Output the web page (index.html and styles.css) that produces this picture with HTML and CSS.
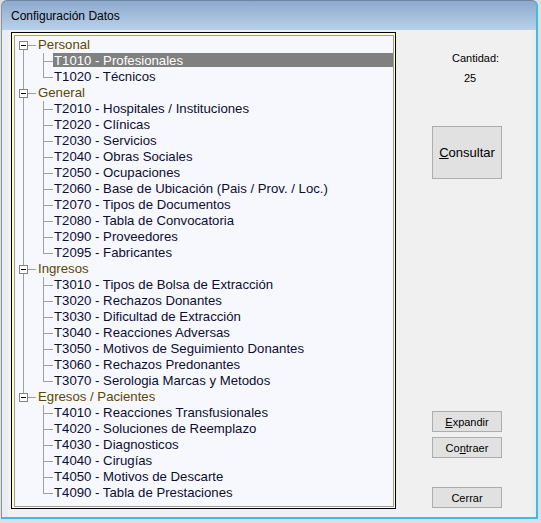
FILE: index.html
```html
<!DOCTYPE html>
<html lang="es">
<head>
  <meta charset="UTF-8" />
  <title>Configuración Datos</title>
  <link rel="stylesheet" href="styles.css">
</head>
<body>

  <div class="window">
    <!-- Title bar -->
    <div class="titlebar">Configuración Datos</div>

    <div class="client">
      <!-- Tree -->
      <div class="tree-frame">
        <div class="tree">

          <div class="group">
            <div class="group-row"><span class="toggle"></span><span class="stub"></span><span class="group-label">Personal</span></div>
            <div class="item"><span class="item-label selected">T1010 - Profesionales</span></div>
            <div class="item"><span class="item-label">T1020 - Técnicos</span></div>
          </div>

          <div class="group">
            <div class="group-row"><span class="toggle"></span><span class="stub"></span><span class="group-label">General</span></div>
            <div class="item"><span class="item-label">T2010 - Hospitales / Instituciones</span></div>
            <div class="item"><span class="item-label">T2020 - Clínicas</span></div>
            <div class="item"><span class="item-label">T2030 - Servicios</span></div>
            <div class="item"><span class="item-label">T2040 - Obras Sociales</span></div>
            <div class="item"><span class="item-label">T2050 - Ocupaciones</span></div>
            <div class="item"><span class="item-label">T2060 - Base de Ubicación (Pais / Prov. / Loc.)</span></div>
            <div class="item"><span class="item-label">T2070 - Tipos de Documentos</span></div>
            <div class="item"><span class="item-label">T2080 - Tabla de Convocatoria</span></div>
            <div class="item"><span class="item-label">T2090 - Proveedores</span></div>
            <div class="item"><span class="item-label">T2095 - Fabricantes</span></div>
          </div>

          <div class="group">
            <div class="group-row"><span class="toggle"></span><span class="stub"></span><span class="group-label">Ingresos</span></div>
            <div class="item"><span class="item-label">T3010 - Tipos de Bolsa de Extracción</span></div>
            <div class="item"><span class="item-label">T3020 - Rechazos Donantes</span></div>
            <div class="item"><span class="item-label">T3030 - Dificultad de Extracción</span></div>
            <div class="item"><span class="item-label">T3040 - Reacciones Adversas</span></div>
            <div class="item"><span class="item-label">T3050 - Motivos de Seguimiento Donantes</span></div>
            <div class="item"><span class="item-label">T3060 - Rechazos Predonantes</span></div>
            <div class="item"><span class="item-label">T3070 - Serologia Marcas y Metodos</span></div>
          </div>

          <div class="group">
            <div class="group-row"><span class="toggle"></span><span class="stub"></span><span class="group-label">Egresos / Pacientes</span></div>
            <div class="item"><span class="item-label">T4010 - Reacciones Transfusionales</span></div>
            <div class="item"><span class="item-label">T4020 - Soluciones de Reemplazo</span></div>
            <div class="item"><span class="item-label">T4030 - Diagnosticos</span></div>
            <div class="item"><span class="item-label">T4040 - Cirugías</span></div>
            <div class="item"><span class="item-label">T4050 - Motivos de Descarte</span></div>
            <div class="item"><span class="item-label">T4090 - Tabla de Prestaciones</span></div>
          </div>

        </div>
      </div>

      <!-- Side panel -->
      <div class="side">
        <div class="count-label">Cantidad:</div>
        <div class="count-value">25</div>
        <button class="btn btn-big"><u>C</u>onsultar</button>

        <div class="bottom-buttons">
          <button class="btn"><u>E</u>xpandir</button>
          <button class="btn">Co<u>n</u>traer</button>
          <button class="btn btn-close">Cerrar</button>
        </div>
      </div>
    </div>
  </div>

</body>
</html>
```

FILE: styles.css
```css
body {
  margin: 0;
  background-color: #dedede;
  font-family: "Liberation Sans", Arial, sans-serif;
}

.window {
  width: 534px;
  height: 516px;
  margin-left: 1px;
  border-left: 1px solid #8d949c;
  border-top: 1px solid #6f86a3;
  border-right: 2px solid #38bde3;
  border-bottom: 2px solid #38bde3;
  border-radius: 6px 6px 0 0;
  background: linear-gradient(#8da9cc, #b9d1ea 29px, #e9ecf0 29px);
  display: flex;
  flex-direction: column;
}

.titlebar {
  height: 29px;
  line-height: 31px;
  padding-left: 9px;
  font-size: 12px;
  color: #000;
}

.client {
  flex: 1;
  margin: 0 3px 0 6px;
  background-color: #f0f0f0;
  display: flex;
  padding: 2px 0 0 3px;
}

/* Tree view */

.tree-frame {
  border: 1px solid #000;
  background-color: #ffffd0;
  padding: 2px 1px 1px 2px;
  width: 380px;
  height: 472px;
}

.tree {
  height: 100%;
  padding-top: 1px;
  border: 1px solid #9d9d9d;
  background-color: #f7f8fe;
  box-sizing: border-box;
  font-size: 13.2px;
  color: #0d0d2e;
}

.group {
  position: relative;
}

.group:not(:last-child)::before {
  content: "";
  position: absolute;
  left: 8px;
  top: 13px;
  bottom: -4px;
  border-left: 1px solid #a0a0a0;
}

.group-row {
  height: 16px;
  display: flex;
  align-items: flex-start;
}

.toggle {
  position: relative;
  width: 9px;
  height: 9px;
  margin: 4px 0 0 4px;
  border: 1px solid #848484;
  background-color: #fff;
  box-sizing: border-box;
}

.toggle::after {
  content: "";
  position: absolute;
  left: 1px;
  top: 3px;
  width: 5px;
  height: 1px;
  background-color: #000;
}

.stub {
  width: 8px;
  margin-top: 8px;
  border-top: 1px solid #a0a0a0;
}

.group-label {
  padding-left: 2px;
  line-height: 16px;
  color: #5a4700;
}

.item {
  position: relative;
  height: 16px;
  display: flex;
  align-items: flex-start;
  padding-left: 38px;
}

.item::before {
  content: "";
  position: absolute;
  left: 28px;
  top: 0;
  height: 16px;
  border-left: 1px solid #a0a0a0;
}

.item:last-child::before {
  height: 8px;
}

.item::after {
  content: "";
  position: absolute;
  left: 28px;
  top: 8px;
  width: 10px;
  border-top: 1px solid #a0a0a0;
}

.item-label {
  line-height: 16px;
  padding: 0 1px;
  white-space: nowrap;
}

.item-label.selected {
  flex: 1;
  height: 14px;
  line-height: 15px;
  background-color: #808080;
  color: #fff;
}

/* Side panel */

.side {
  flex: 1;
  display: flex;
  flex-direction: column;
  align-items: flex-start;
  padding-bottom: 9px;
  font-size: 11px;
  color: #000;
}

.count-label {
  margin: 19px 0 0 56px;
  line-height: 14px;
}

.count-value {
  margin: 6px 0 0 68px;
  line-height: 14px;
}

.btn {
  width: 70px;
  height: 21px;
  margin-left: 36px;
  padding: 0;
  border: 1px solid #adadad;
  background-color: #e1e1e1;
  font-family: "Liberation Sans", Arial, sans-serif;
  font-size: 11px;
  color: #000;
}

.btn-big {
  height: 53px;
  margin-top: 41px;
  font-size: 13px;
}

.bottom-buttons {
  margin-top: auto;
  display: flex;
  flex-direction: column;
  gap: 5px;
}

.btn-close {
  margin-top: 24px;
}
```
